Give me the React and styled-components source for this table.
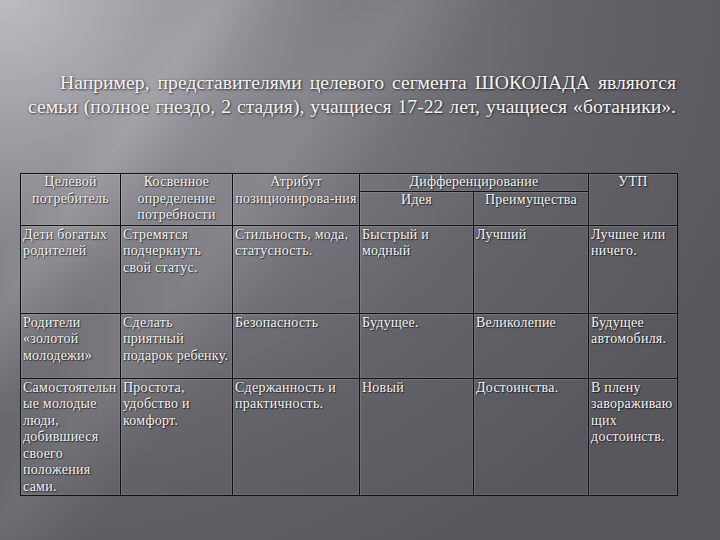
import React from "react";
import styled, { createGlobalStyle } from "styled-components";

const Global = createGlobalStyle`
  html, body { margin: 0; padding: 0; }
  body { width: 720px; height: 540px; overflow: hidden; }
`;

const Slide = styled.div`
  position: relative;
  width: 720px;
  height: 540px;
  overflow: hidden;
  box-sizing: border-box;
  padding: 70px 44px 0 20px;
  font-family: "Liberation Serif", "Times New Roman", serif;
  color: #f4f4f6;
  background:
    linear-gradient(125deg, rgba(255,255,255,0) 0%, rgba(255,255,255,0) 16%, rgba(255,255,255,0.10) 20%, rgba(255,255,255,0) 26%, rgba(255,255,255,0) 100%),
    linear-gradient(128deg, rgba(255,255,255,0) 0%, rgba(255,255,255,0) 30%, rgba(255,255,255,0.08) 36%, rgba(255,255,255,0) 44%, rgba(255,255,255,0) 100%),
    radial-gradient(ellipse 110% 120% at 0% 0%, #bdbcc1 0%, #9c9ba1 22%, #7c7b82 45%, #65646a 70%, #58575d 100%);
`;

const Lead = styled.p`
  margin: 0 0 55px 0;
  padding-left: 8px;
  font-size: 19.7px;
  line-height: 24px;
  text-indent: 32px;
  text-align: justify;
  text-align-last: justify;
  white-space: nowrap;
  text-shadow: 1px 1px 2px rgba(0,0,0,0.55), 0 0 3px rgba(0,0,0,0.35);
`;

const Table = styled.table`
  border-collapse: collapse;
  table-layout: fixed;
  width: 657px;
  font-size: 14px;
  letter-spacing: 0.25px;
  line-height: 16.5px;
  text-shadow: 1px 1px 1px rgba(0,0,0,0.6), 0 0 2px rgba(0,0,0,0.45);
`;

const Cell = styled.td`
  border: 1.5px solid #111114;
  box-shadow: inset 1px 1px 0 rgba(255,255,255,0.12), inset -1px -1px 0 rgba(255,255,255,0.08);
  padding: ${(p) => (p.$head ? "0 2px" : "1px 2px 0 2px")};
  vertical-align: top;
  text-align: ${(p) => (p.$head ? "center" : "left")};
  height: ${(p) => p.$h || "auto"};
  box-sizing: border-box;
  overflow: hidden;
`;

const cols = [100, 112, 127, 114, 115, 89];

const rows = [
  {
    h: "88px",
    cells: [
      "Дети богатых родителей",
      "Стремятся подчеркнуть свой статус.",
      "Стильность, мода, статусность.",
      "Быстрый и модный",
      "Лучший",
      "Лучшее или ничего.",
    ],
  },
  {
    h: "65px",
    cells: [
      "Родители «золотой молодежи»",
      "Сделать приятный подарок ребенку.",
      "Безопасность",
      "Будущее.",
      "Великолепие",
      "Будущее автомобиля.",
    ],
  },
  {
    h: "117px",
    cells: [
      "Самостоятельн ые молодые люди, добившиеся своего положения сами.",
      "Простота, удобство и комфорт.",
      "Сдержанность и практичность.",
      "Новый",
      "Достоинства.",
      "В плену завораживаю щих достоинств.",
    ],
  },
];

export default function App() {
  return (
    <>
      <Global />
      <Slide>
        <Lead>
          Например, представителями целевого сегмента ШОКОЛАДА являются
          <br />
          семьи (полное гнездо, 2 стадия), учащиеся 17-22 лет, учащиеся «ботаники».
        </Lead>
        <Table>
          <colgroup>
            {cols.map((w, i) => (
              <col key={i} style={{ width: w }} />
            ))}
          </colgroup>
          <tbody>
            <tr>
              <Cell $head rowSpan={2}>Целевой потребитель</Cell>
              <Cell $head rowSpan={2}>Косвенное определение потребности</Cell>
              <Cell $head rowSpan={2}>Атрибут позиционирова-ния</Cell>
              <Cell $head colSpan={2} $h="17px">Дифференцирование</Cell>
              <Cell $head rowSpan={2}>УТП</Cell>
            </tr>
            <tr>
              <Cell $head $h="34px">Идея</Cell>
              <Cell $head $h="34px">Преимущества</Cell>
            </tr>
            {rows.map((r, i) => (
              <tr key={i}>
                {r.cells.map((c, j) => (
                  <Cell key={j} $h={r.h}>{c}</Cell>
                ))}
              </tr>
            ))}
          </tbody>
        </Table>
      </Slide>
    </>
  );
}
